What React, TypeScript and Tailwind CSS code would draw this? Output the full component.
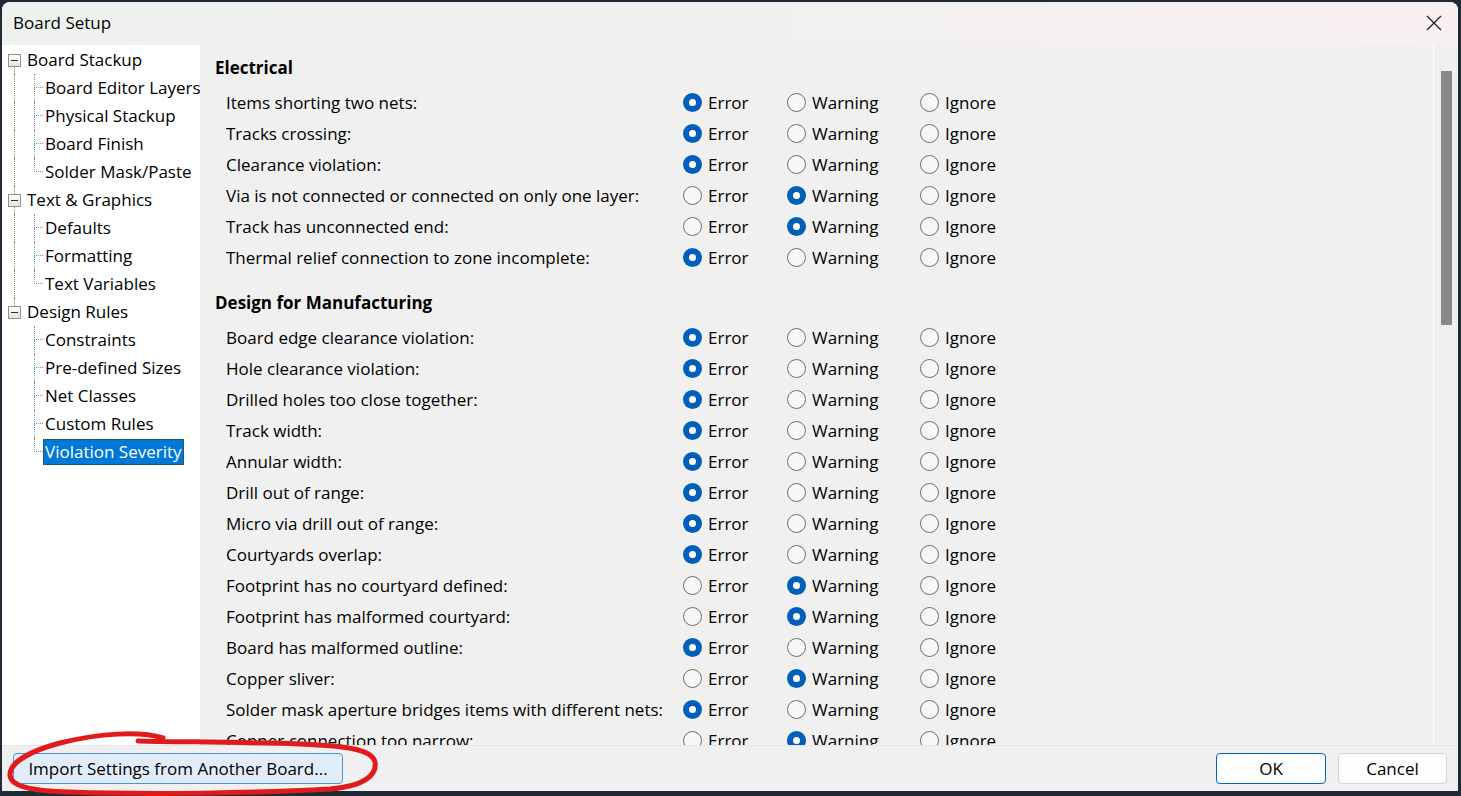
import React from "react";

type Sev = "E" | "W" | "I";

const electrical: [string, Sev][] = [
  ["Items shorting two nets:", "E"],
  ["Tracks crossing:", "E"],
  ["Clearance violation:", "E"],
  ["Via is not connected or connected on only one layer:", "W"],
  ["Track has unconnected end:", "W"],
  ["Thermal relief connection to zone incomplete:", "E"],
];

const manufacturing: [string, Sev][] = [
  ["Board edge clearance violation:", "E"],
  ["Hole clearance violation:", "E"],
  ["Drilled holes too close together:", "E"],
  ["Track width:", "E"],
  ["Annular width:", "E"],
  ["Drill out of range:", "E"],
  ["Micro via drill out of range:", "E"],
  ["Courtyards overlap:", "E"],
  ["Footprint has no courtyard defined:", "W"],
  ["Footprint has malformed courtyard:", "W"],
  ["Board has malformed outline:", "E"],
  ["Copper sliver:", "W"],
  ["Solder mask aperture bridges items with different nets:", "E"],
  ["Copper connection too narrow:", "W"],
  ["Silkscreen overlap:", "W"],
];

const tree = [
  { label: "Board Stackup", children: ["Board Editor Layers", "Physical Stackup", "Board Finish", "Solder Mask/Paste"] },
  { label: "Text & Graphics", children: ["Defaults", "Formatting", "Text Variables"] },
  { label: "Design Rules", children: ["Constraints", "Pre-defined Sizes", "Net Classes", "Custom Rules", "Violation Severity"] },
];

function Radio({ on }: { on: boolean }) {
  if (on) {
    return (
      <span className="flex h-[19px] w-[19px] shrink-0 items-center justify-center rounded-full bg-[#005fb8]">
        <span className="h-[7px] w-[7px] rounded-full bg-white" />
      </span>
    );
  }
  return <span className="h-[19px] w-[19px] shrink-0 rounded-full border border-[#6e6e6e] bg-[#f7f7f7]" />;
}

function SeverityRow({ label, sev }: { label: string; sev: Sev }) {
  return (
    <div className="grid h-[31px] grid-cols-[457px_104px_133px_120px] items-center pl-[11px]">
      <span className="whitespace-nowrap">{label}</span>
      <span className="flex items-center gap-[6px]">
        <Radio on={sev === "E"} />
        Error
      </span>
      <span className="flex items-center gap-[6px]">
        <Radio on={sev === "W"} />
        Warning
      </span>
      <span className="flex items-center gap-[6px]">
        <Radio on={sev === "I"} />
        Ignore
      </span>
    </div>
  );
}

function TreePanel() {
  return (
    <div className="w-[198px] shrink-0 overflow-hidden bg-white pt-[1px]">
      {tree.map((group, gi) => {
        const first = gi === 0;
        const last = gi === tree.length - 1;
        return (
          <div key={group.label}>
            <div className="flex h-[28px] items-stretch">
              <div className="flex w-[25px] shrink-0 flex-col pl-[6px]">
                <div className={`ml-[6px] h-[8px] w-0 ${first ? "" : "border-l border-dotted border-[#8c8c8c]"}`} />
                <div className="flex h-[13px] w-[13px] items-center justify-center border border-[#919191] bg-gradient-to-b from-white to-[#e4e4e4]">
                  <span className="h-px w-[7px] bg-[#2d2d2d]" />
                </div>
                <div className={`ml-[6px] w-0 flex-1 ${last ? "" : "border-l border-dotted border-[#8c8c8c]"}`} />
              </div>
              <span className="flex items-center whitespace-nowrap">{group.label}</span>
            </div>
            {group.children.map((child, ci) => {
              const lastChild = ci === group.children.length - 1;
              const selected = child === "Violation Severity";
              return (
                <div key={child} className="flex h-[28px] items-stretch">
                  <div className="w-[32px] shrink-0 pl-[12px]">
                    <div className={`h-full w-0 ${last ? "" : "border-l border-dotted border-[#8c8c8c]"}`} />
                  </div>
                  <div className="flex w-[9px] shrink-0 flex-col">
                    <div className="h-[14px] border-b border-l border-dotted border-[#8c8c8c]" />
                    <div className={`flex-1 ${lastChild ? "" : "border-l border-dotted border-[#8c8c8c]"}`} />
                  </div>
                  <span className="flex items-center">
                    <span
                      className={
                        selected
                          ? "flex h-[26px] items-center whitespace-nowrap border border-dotted border-[#4d3a00] bg-[#0078d7] px-[1px] text-white"
                          : "whitespace-nowrap px-[2px]"
                      }
                    >
                      {child}
                    </span>
                  </span>
                </div>
              );
            })}
          </div>
        );
      })}
    </div>
  );
}

export default function App() {
  return (
    <div className="relative h-[796px] w-[1461px] bg-[#1f2a36] pb-[5px] pl-[2px] pr-[3px] pt-[2px] font-['Open_Sans',sans-serif] text-[17px] text-black">
      <div className="flex h-full flex-col overflow-hidden rounded-t-[8px] bg-[#f0f0f0]">
        {/* title bar */}
        <div className="flex h-[43px] shrink-0 items-center justify-between bg-gradient-to-r from-[#eef1ee] via-[#f1f0f0] to-[#f8eff2] pb-[2px] pl-[11px]">
          <span className="text-[17px]">Board Setup</span>
          <div className="flex h-full w-[48px] items-center justify-center">
            <svg width="16" height="16" viewBox="0 0 16 16" fill="none" stroke="#1a1a1a" strokeWidth="1.2">
              <path d="M1 1 L15 15 M15 1 L1 15" />
            </svg>
          </div>
        </div>

        {/* main */}
        <div className="flex h-[700px] shrink-0">
          <TreePanel />
          <div className="flex min-w-0 flex-1">
            <div className="min-w-0 flex-1 overflow-hidden px-[15px] pt-[11px]">
              <div className="flex h-[24px] items-center font-bold">Electrical</div>
              <div className="mt-[7px]">
                {electrical.map(([l, s]) => (
                  <SeverityRow key={l} label={l} sev={s} />
                ))}
              </div>
              <div className="mt-[18px] flex h-[24px] items-center font-bold">Design for Manufacturing</div>
              <div className="mt-[7px]">
                {manufacturing.map(([l, s]) => (
                  <SeverityRow key={l} label={l} sev={s} />
                ))}
              </div>
            </div>
            <div className="w-[25px] shrink-0 border-l border-white pl-[7px] pt-[26px]">
              <div className="h-[254px] w-[11px] bg-[#888888]" />
            </div>
          </div>
        </div>

        {/* bottom bar */}
        <div className="flex flex-1 items-start justify-between border-t border-[#e5e5e5] pl-[11px] pr-[11px] pt-[7px]">
          <button className="flex h-[31px] w-[330px] items-center justify-center rounded-[4px] border border-[#4a93d8] bg-[#e0edf9]">
            Import Settings from Another Board...
          </button>
          <div className="flex gap-[12px]">
            <button className="flex h-[31px] w-[110px] items-center justify-center rounded-[4px] border border-[#0067c0] bg-[#fdfdfd]">
              OK
            </button>
            <button className="flex h-[31px] w-[109px] items-center justify-center rounded-[4px] border border-[#d3d3d3] bg-[#fdfdfd]">
              Cancel
            </button>
          </div>
        </div>
      </div>

      {/* red hand-drawn annotation */}
      <svg className="pointer-events-none absolute left-0 top-0" width="1461" height="796" viewBox="0 0 1461 796" fill="none">
        <path
          d="M163 738 C140 731 100 733 60 743 C30 751 11 762 10 774 C9 786 30 791 70 792 C150 795 260 793 330 789 C366 786 377 774 375 762 C372 750 350 746 300 744 C240 742 180 742 138 741"
          stroke="#e11b1b"
          strokeWidth="5"
          strokeLinecap="round"
          strokeLinejoin="round"
        />
      </svg>
    </div>
  );
}
